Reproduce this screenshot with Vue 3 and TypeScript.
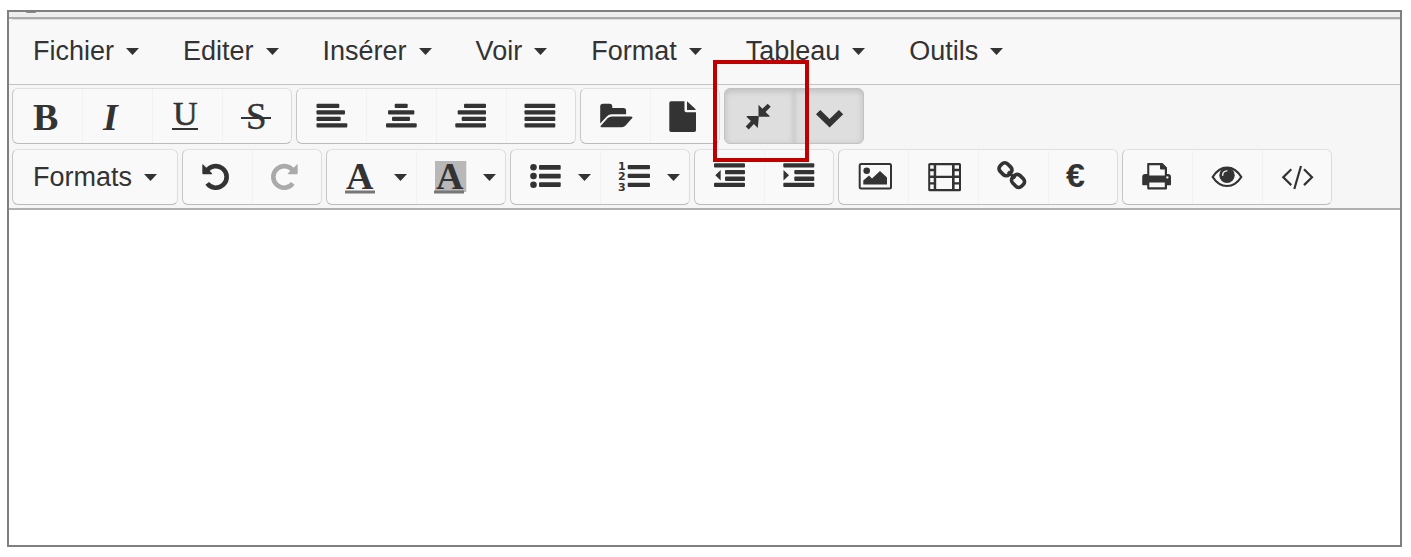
<script setup lang="ts">
interface Tool {
  id: string
  label: string
  split?: boolean
  pressed?: boolean
  disabled?: boolean
  marked?: boolean
}

const menus: string[] = ['Fichier', 'Editer', 'Insérer', 'Voir', 'Format', 'Tableau', 'Outils']

const firstRow: Tool[][] = [
  [
    { id: 'bold', label: 'Gras' },
    { id: 'italic', label: 'Italique' },
    { id: 'underline', label: 'Souligné' },
    { id: 'strike', label: 'Barré' },
  ],
  [
    { id: 'left', label: 'Aligner à gauche' },
    { id: 'center', label: 'Centrer' },
    { id: 'right', label: 'Aligner à droite' },
    { id: 'justify', label: 'Justifier' },
  ],
  [
    { id: 'open', label: 'Ouvrir' },
    { id: 'file', label: 'Nouveau document' },
  ],
  [
    { id: 'compress', label: 'Plein écran', pressed: true, marked: true },
    { id: 'chevron', label: 'Afficher les outils', pressed: true },
  ],
]

const secondRow: Tool[][] = [
  [
    { id: 'undo', label: 'Annuler' },
    { id: 'redo', label: 'Rétablir', disabled: true },
  ],
  [
    { id: 'color', label: 'Couleur du texte', split: true },
    { id: 'background', label: 'Couleur de fond', split: true },
  ],
  [
    { id: 'bullets', label: 'Liste à puces', split: true },
    { id: 'numbers', label: 'Liste numérotée', split: true },
  ],
  [
    { id: 'outdent', label: 'Diminuer le retrait' },
    { id: 'indent', label: 'Augmenter le retrait' },
  ],
  [
    { id: 'image', label: 'Image' },
    { id: 'film', label: 'Vidéo' },
    { id: 'link', label: 'Lien' },
    { id: 'euro', label: 'Symbole' },
  ],
  [
    { id: 'print', label: 'Imprimer' },
    { id: 'eye', label: 'Aperçu' },
    { id: 'code', label: 'Code source' },
  ],
]

const bar = (x: number, y: number, end: number, h = 4.3): string =>
  `<rect x="${x}" y="${y}" width="${end - x}" height="${h}" rx="1"/>`

const serif = 'font-family="Liberation Serif, serif"'
const turn =
  '<path d="M9.6 14.400A10.800 10.800 0 1 1 10.200 26.400" fill="none" stroke="currentColor" stroke-width="4.600"/><path d="M5.300 8q0-1 .8-.5L14.800 16q1 1.300-.5 1.300H6.300q-1 0-1-1z"/>'

const icons: Record<string, string> = {
  bold: `<text x="6" y="34" font-size="38" font-weight="700" ${serif}>B</text>`,
  italic: `<text x="6" y="34" font-size="38" font-weight="700" font-style="italic" ${serif}>I</text>`,
  underline: `<text x="6" y="29" font-size="34" stroke="currentColor" stroke-width=".6" ${serif}>U</text><rect x="5" y="32" width="26" height="2"/>`,
  strike: `<text x="9" y="33" font-size="37" stroke="currentColor" stroke-width=".4" ${serif}>S</text><rect x="4" y="21" width="30" height="2"/>`,
  left: bar(5.5, 7.7, 28.3) + bar(5.5, 14.2, 34) + bar(5.5, 20.8, 29.7) + bar(5.5, 27.2, 36.3),
  center: bar(13.7, 7.7, 26.7) + bar(7, 14.2, 33.3) + bar(11, 20.8, 29) + bar(5, 27.2, 35.7),
  right: bar(13, 7.7, 35) + bar(6.7, 14.2, 35) + bar(10.7, 20.8, 35) + bar(4.3, 27.2, 35),
  justify: bar(3.5, 7.7, 34.3) + bar(3.5, 14.2, 34.3) + bar(3.5, 20.8, 34.3) + bar(3.5, 27.2, 34.3),
  open: '<path d="M5.200 27.500V10.500q0-2.800 2.800-2.800h6.500q2.800 0 2.800 2.800v1.500h11q2.800 0 2.800 2.800v3.400H17q-3.200 0-5.200 2.300z"/><path d="M17 20.500h19q2.400 0 1 1.800l-6.400 7.300q-1.500 1.700-4 1.700H7q-2.400 0-1-1.800l6.600-7.300q1.600-1.700 4.400-1.700z"/>',
  file: '<path d="M6 5.300h13.500v9.200q0 1.700 1.700 1.700H31v18q0 1.800-1.800 1.800H6q-1.700 0-1.700-1.700V7q0-1.700 1.700-1.700z"/><path d="M22 5.500q.8.300 1.400.9l6.500 6.200q.7.700 1 1.500H22z"/>',
  compress: '<path d="M19.500 8.700l3.900 4 5.300-4.900 3 3-5.200 5.200 4.100 3.900q.5.800-.5.900h-10.600z"/><path d="M18.800 32l-3.900-4-5.200 5.500-3-3 5.200-5.500-4.200-4q-.4-.8.600-.9h10.500q1 0 1 1z"/>',
  chevron: '<path d="M7 18.200l4.300-4.300 9.300 9 9.300-9 4.300 4.300L20.600 31.500z"/>',
  undo: turn,
  redo: `<g transform="translate(36 0) scale(-1 1)">${turn}</g>`,
  color: `<text x="5" y="32" font-size="38" font-weight="700" ${serif}>A</text><rect x="4" y="33.500" width="30" height="3" fill="#777"/>`,
  background: `<rect x="4" y="4" width="31.300" height="31" fill="#b8b8b8"/><text x="5" y="32" font-size="38" font-weight="700" ${serif}>A</text><rect x="3" y="33.500" width="30" height="3" fill="#777"/>`,
  bullets:
    '<circle cx="8.500" cy="10.300" r="3.300"/><circle cx="8.500" cy="19" r="3.300"/><circle cx="8.500" cy="27.700" r="3.300"/>' +
    bar(14, 8, 35.7, 4.8) + bar(14, 16.7, 35.7, 4.8) + bar(14, 25.3, 35.7, 4.8),
  numbers:
    '<g font-family="DejaVu Sans, sans-serif" font-size="11" font-weight="700"><text x="3" y="12.500">1</text><text x="3" y="23">2</text><text x="3" y="34">3</text></g>' +
    bar(12.7, 8, 35) + bar(12.7, 16.8, 35) + bar(12.7, 25.8, 35),
  outdent: bar(5, 6.3, 36) + bar(16, 13, 36) + bar(16, 19.6, 36) + bar(5, 25.8, 36) + '<path d="M11.700 13v10.600L6.300 18.300z"/>',
  indent: bar(4.3, 6.3, 35.3) + bar(15.3, 13, 35.3) + bar(15.3, 19.6, 35.3) + bar(4.3, 25.8, 35.3) + '<path d="M4.500 13v10.600L10 18.300z"/>',
  image:
    '<rect x="6.700" y="7" width="31.300" height="24.500" rx="1.500" fill="none" stroke="currentColor" stroke-width="2"/><circle cx="13.700" cy="13.700" r="3.300"/><path d="M10.300 27.500v-4l5.700-5 3 3 8-7.500 7 6.500v7z"/>',
  film:
    '<path fill-rule="evenodd" d="M7 6h29.500q1.500 0 1.500 1.500v25.300q0 1.500-1.500 1.500H7q-1.800 0-1.800-1.500V7.500Q5.200 6 7 6zM7.200 8.200v3.600H10.700V8.200zM7.200 14.200v4.300H10.700v-4.300zM7.200 20.900v4.300H10.700v-4.300zM7.200 27.600v4.300H10.700v-4.300zM13.200 8.200v10.500h15.800V8.200zM13.200 21v11h15.800V21zM31.600 8.200v3.600H36V8.200zM31.600 14.200v4.300H36v-4.300zM31.600 20.900v4.300H36v-4.300zM31.600 27.600v4.300H36v-4.300z"/>',
  link:
    '<g fill="none" stroke="currentColor" stroke-width="3.700"><rect x="6.300" y="7" width="12.500" height="10.500" rx="4" transform="rotate(45 12.500 12.200)"/><rect x="18.700" y="18.700" width="12.500" height="10.500" rx="4" transform="rotate(45 25 24)"/><path d="M15 14.700l7 6.800" stroke-width="3"/></g>',
  euro: '<text x="3" y="30" font-size="34" font-weight="700" font-family="Liberation Sans, sans-serif">€</text>',
  print:
    '<path fill-rule="evenodd" d="M11 6h14.500l4.500 4.500V17h1q3 0 3 3v7.500q0 .8-.8.800H30v3.200q0 1-1 1H11.200q-1 0-1-1v-3.200H6q-.8 0-.8-.8V20q0-3 3-3h2V7q0-1 .8-1zM12.300 8.200v10.300h15.500v-6H24q-1 0-1-1V8.200zM12.300 25.600v4.700h15.500v-4.700zM30.300 19.200a1.200 1.200 0 1 0 .1 0z"/>',
  eye:
    '<path d="M5.700 20Q11.500 10.700 20 10.700T34.300 20Q28.500 29 20 29T5.700 20z" fill="none" stroke="currentColor" stroke-width="2.200"/><circle cx="20" cy="18.300" r="7.700"/><path d="M15.700 18.200q0-4 4.200-4.300" fill="none" stroke="#f8f8f8" stroke-width="1.400" stroke-linecap="round"/>',
  code: '<path d="M14.300 12.300l-8 8 8 7.800M24 9l-6.700 23M27 12.300l8 8-8 7.800" fill="none" stroke="currentColor" stroke-width="2.200"/>',
}
</script>

<template>
  <main class="page">
    <section class="frame">
      <div class="strip"><span class="dot"></span></div>
      <div class="editor">
        <nav class="menubar" aria-label="Menu">
          <button v-for="menu in menus" :key="menu" type="button" class="menu">
            {{ menu }}
            <svg class="caret" viewBox="0 0 13 7" aria-hidden="true"><path d="M0 0h13L6.500 7z" /></svg>
          </button>
        </nav>
        <div class="toolbar" role="toolbar" aria-label="Outils de mise en forme">
          <div v-for="(row, r) in [firstRow, secondRow]" :key="r" class="row">
            <div v-if="r === 1" class="group">
              <button type="button" class="formats">
                Formats
                <svg class="caret" viewBox="0 0 13 7" aria-hidden="true"><path d="M0 0h13L6.500 7z" /></svg>
              </button>
            </div>
            <div v-for="(group, g) in row" :key="g" class="group" :class="{ active: group[0].pressed }">
              <div v-for="tool in group" :key="tool.id" class="cell" :class="{ pressed: tool.pressed }">
                <button
                  type="button"
                  class="tool"
                  :class="{ narrow: tool.split }"
                  :aria-label="tool.label"
                  :aria-pressed="tool.pressed"
                  :disabled="tool.disabled"
                >
                  <svg class="icon" viewBox="0 0 40 40" aria-hidden="true" v-html="icons[tool.id]"></svg>
                </button>
                <button v-if="tool.split" type="button" class="more" :aria-label="`${tool.label} : options`">
                  <svg class="caret" viewBox="0 0 13 7" aria-hidden="true"><path d="M0 0h13L6.500 7z" /></svg>
                </button>
                <span v-if="tool.marked" class="marker"></span>
              </div>
            </div>
          </div>
        </div>
        <textarea class="content" aria-label="Contenu"></textarea>
      </div>
    </section>
  </main>
</template>

<style>
body {
  background: #fff;
}
</style>

<style scoped>
.page {
  box-sizing: border-box;
  display: flex;
  min-height: 100vh;
  padding: 10px 9px 10px 7px;
  font-family: "Liberation Sans", Arial, sans-serif;
  color: #333;
}
.frame {
  flex: 1;
  min-width: 0;
  display: flex;
  flex-direction: column;
  border: 2px solid #7f7f7f;
}
.strip {
  height: 5px;
  background: #eee;
  overflow: hidden;
}
.dot {
  display: block;
  width: 10px;
  height: 1px;
  margin-left: 17px;
  border-radius: 0 0 5px 5px;
  background: #888;
}
.editor {
  flex: 1;
  display: flex;
  flex-direction: column;
  border-top: 2px solid #aaa;
}
.menubar {
  box-sizing: border-box;
  display: flex;
  flex-wrap: wrap;
  min-height: 66px;
  padding-left: 2px;
  border-top: 1px solid #ddd;
  border-top-left-radius: 5px;
  border-bottom: 1px solid #c4c4c4;
  background: #f8f8f8;
}
button {
  display: flex;
  align-items: center;
  margin: 0;
  padding: 0;
  border: 0;
  background: none;
  font: inherit;
  color: inherit;
}
.menu,
.formats {
  gap: 12px;
  font-size: 27px;
  line-height: 32px;
}
.menu {
  padding: 0 22px 2px;
}
.formats {
  padding: 0 20px 0 20px;
}
.caret {
  display: block;
  width: 13px;
  height: 7px;
  fill: currentColor;
}
.toolbar {
  display: flex;
  flex-direction: column;
  gap: 5px;
  padding: 3px;
  border-bottom: 2px solid #b0b0b0;
  background: #f6f6f6;
}
.row {
  display: flex;
  flex-wrap: wrap;
  gap: 4px;
}
.group {
  box-sizing: border-box;
  display: flex;
  height: 56px;
  border: 1px solid #c6c6c6;
  border-top-color: #e0e0e0;
  border-right-color: #dcdcdc;
  border-bottom-color: #bbb;
  border-radius: 6px;
  background: #f9f9f9;
}
.cell {
  position: relative;
  display: flex;
}
.cell + .cell {
  box-shadow: inset 1px 0 #f2f2f2;
}
.tool {
  justify-content: center;
  width: 70px;
}
.narrow {
  width: 58px;
  justify-content: flex-end;
}
.cell:first-child .tool {
  width: 69px;
  padding-right: 1px;
  box-sizing: border-box;
}
.cell:last-child .tool {
  width: 69px;
}
.cell:first-child .narrow {
  width: 57px;
  padding-right: 3px;
}
.cell:last-child .narrow {
  width: 58px;
  padding-right: 3px;
  box-sizing: border-box;
}
.more {
  justify-content: center;
  width: 32px;
}
.cell:last-child .more {
  width: 31px;
}
.tool:disabled {
  color: #aaa;
}
.icon {
  display: block;
  flex: none;
  width: 40px;
  height: 40px;
  overflow: visible;
  fill: currentColor;
}
.active {
  border-color: #c2c2c2;
  background: #dedede;
}
.cell.pressed {
  box-shadow: inset 0 2px 6px #bcbcbc;
}
.pressed:first-child {
  border-radius: 5px 0 0 5px;
}
.pressed:last-child {
  border-radius: 0 5px 5px 0;
}
.marker {
  position: absolute;
  z-index: 1;
  inset: -29px -15px -19px -12px;
  border: 4px solid #c00000;
  pointer-events: none;
}
.content {
  box-sizing: border-box;
  flex: 1;
  width: 100%;
  padding: 20px;
  border: 0;
  outline: 0;
  resize: none;
  background: #fff;
  font: inherit;
}
</style>
